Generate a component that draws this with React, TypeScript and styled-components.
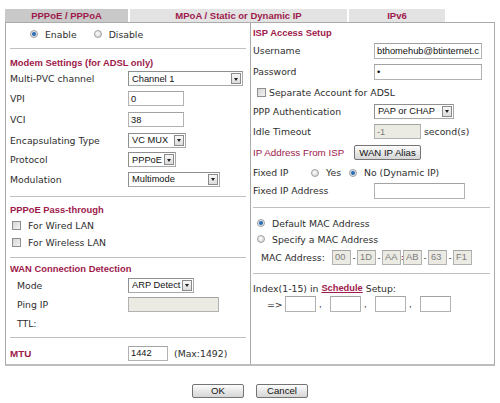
import React from "react";
import styled, { createGlobalStyle } from "styled-components";

const maroon = "#9e1a4b";
const verdana = `"DejaVu Sans", Verdana, sans-serif`;
const arial = `"Liberation Sans", Arial, sans-serif`;

const Global = createGlobalStyle`
  html, body { margin: 0; padding: 0; background: #fff; }
  body { font-family: ${verdana}; font-size: 9.3px; color: #2e2e2e; }
`;

const Page = styled.div`
  width: 490px;
  padding: 9px 0 0 5px;
`;

const TabBar = styled.div`
  display: flex;
  gap: 2px;
  height: 13px;
`;

const Tab = styled.div<{ $w: number; $active?: boolean }>`
  width: ${(p) => p.$w}px;
  background: ${(p) => (p.$active ? "#c9c9c9" : "#e3e3e3")};
  color: ${maroon};
  font: bold 9.5px ${arial};
  display: flex;
  align-items: center;
  justify-content: center;
`;

const Panel = styled.div`
  box-sizing: border-box;
  height: 344px;
  border: 1px solid #ababab;
  border-bottom: 2px solid #bdbdbd;
  display: grid;
  grid-template-columns: 245px 1fr;
`;

const Column = styled.div<{ $pl: number; $divider?: boolean }>`
  box-sizing: border-box;
  display: flex;
  flex-direction: column;
  padding-left: ${(p) => p.$pl}px;
  border-right: ${(p) => (p.$divider ? "1px solid #ababab" : "none")};
`;

const Row = styled.div<{ $h: number; $mt?: number; $pl?: number }>`
  display: flex;
  align-items: center;
  height: ${(p) => p.$h}px;
  margin-top: ${(p) => p.$mt ?? 0}px;
  padding-left: ${(p) => p.$pl ?? 0}px;
  white-space: nowrap;
`;

const Heading = styled.div<{ $h: number; $mt?: number }>`
  display: flex;
  align-items: center;
  height: ${(p) => p.$h}px;
  margin-top: ${(p) => p.$mt ?? 0}px;
  color: ${maroon};
  font: bold 9.4px ${arial};
  white-space: nowrap;
`;

const Divider = styled.div<{ $mt: number; $mr?: number }>`
  height: 1px;
  background: #c0c0c0;
  margin-top: ${(p) => p.$mt}px;
  margin-right: ${(p) => p.$mr ?? 4}px;
`;

const Label = styled.span<{ $w?: number; $accent?: boolean; $bold?: boolean }>`
  flex-shrink: 0;
  width: ${(p) => (p.$w ? `${p.$w}px` : "auto")};
  color: ${(p) => (p.$accent ? maroon : "#2e2e2e")};
  font-family: ${(p) => (p.$accent ? arial : verdana)};
  font-size: ${(p) => (p.$accent ? "9.8px" : "9.3px")};
  font-weight: ${(p) => (p.$bold ? "bold" : "normal")};
`;

const Unit = styled.span<{ $ml?: number }>`
  margin-left: ${(p) => p.$ml ?? 0}px;
`;

const TextInput = styled.input<{ $w: number; $off?: boolean; $h?: number }>`
  box-sizing: border-box;
  width: ${(p) => p.$w}px;
  height: ${(p) => p.$h ?? 15}px;
  margin: 0;
  padding: 0 2px;
  border: 1px solid #b2b2b2;
  border-top-color: #a3a3a3;
  background: ${(p) => (p.$off ? "#ebebe4" : "#fff")};
  color: ${(p) => (p.$off ? "#7c7c7c" : "#111")};
  font: 9.3px ${arial};
  outline: none;
`;

const SelectBox = styled.div<{ $w: number }>`
  box-sizing: border-box;
  width: ${(p) => p.$w}px;
  height: 15px;
  display: flex;
  align-items: center;
  border: 1px solid #a9a9a9;
  border-top-color: #8f8f8f;
  border-left-color: #8f8f8f;
  background: #fff;
  padding-left: 3px;
  font: 9.3px ${arial};
  color: #111;
`;

const SelectText = styled.span`
  flex: 1;
  overflow: hidden;
`;

const ArrowBtn = styled.span`
  box-sizing: border-box;
  width: 10px;
  height: 11px;
  margin-right: 1px;
  border: 1px solid #8a8a8a;
  background: linear-gradient(#f7f7f7, #dcdcdc);
  display: flex;
  align-items: center;
  justify-content: center;
  &::after {
    content: "";
    border-left: 2.5px solid transparent;
    border-right: 2.5px solid transparent;
    border-top: 3px solid #222;
    margin-top: 1px;
  }
`;

const Choice = styled.span<{ $ml?: number; $gap?: number }>`
  display: inline-flex;
  align-items: center;
  gap: ${(p) => p.$gap ?? 7}px;
  margin-left: ${(p) => p.$ml ?? 0}px;
`;

const Radio = styled.span<{ $on?: boolean }>`
  box-sizing: border-box;
  width: 8px;
  height: 8px;
  border-radius: 50%;
  flex-shrink: 0;
  border: 1px solid #a0a0a0;
  background: ${(p) =>
    p.$on
      ? "radial-gradient(circle, #2d6fb5 0 1.5px, #8fb4da 2px, #e6e6e6 2.6px, #cfcfcf 100%)"
      : "radial-gradient(circle at 40% 40%, #fdfdfd, #cacaca)"};
`;

const Check = styled.span`
  box-sizing: border-box;
  width: 9px;
  height: 9px;
  flex-shrink: 0;
  border: 1px solid #8e8e8e;
  background: linear-gradient(135deg, #d4d4d4, #f4f4f4);
`;

const Button = styled.button<{ $w: number; $h?: number }>`
  box-sizing: border-box;
  width: ${(p) => p.$w}px;
  height: ${(p) => p.$h ?? 14}px;
  margin: 0;
  padding: 0;
  border: 1px solid #747474;
  border-radius: 2px;
  background: linear-gradient(#fdfdfd, #e6e6e6 55%, #d6d6d6);
  font: 9.6px ${arial};
  color: #111;
  line-height: 1;
`;

const MacGroup = styled.div`
  display: flex;
  align-items: center;
`;

const Sep = styled.span<{ $w: number; $accent?: boolean }>`
  width: ${(p) => p.$w}px;
  text-align: center;
  color: ${(p) => (p.$accent ? maroon : "#555")};
  font: bold 8px ${arial};
`;

const Comma = styled.span`
  width: 14px;
  padding-left: 3px;
  box-sizing: border-box;
  font: 9.3px ${arial};
`;

const ScheduleLink = styled.a`
  color: ${maroon};
  font: bold 9.3px ${arial};
  text-decoration: underline;
  margin: 0 3px;
`;

const Footer = styled.div`
  display: flex;
  justify-content: center;
  gap: 12px;
  margin-top: 18px;
`;

const Select = ({ w, value }: { w: number; value: string }) => (
  <SelectBox $w={w}>
    <SelectText>{value}</SelectText>
    <ArrowBtn />
  </SelectBox>
);

const mac = ["00", "1D", "AA", "AB", "63", "F1"];

export default function App() {
  return (
    <>
      <Global />
      <Page>
        <TabBar>
          <Tab $w={123} $active>PPPoE / PPPoA</Tab>
          <Tab $w={217}>MPoA / Static or Dynamic IP</Tab>
          <Tab $w={96}>IPv6</Tab>
        </TabBar>
        <Panel>
          <Column $pl={4} $divider>
            <Row $h={22}>
              <Choice $ml={20}><Radio $on />Enable</Choice>
              <Choice $ml={17}><Radio />Disable</Choice>
            </Row>
            <Divider $mt={3} />
            <Heading $h={14} $mt={6}>Modem Settings (for ADSL only)</Heading>
            <Row $h={19}><Label $w={118}>Multi-PVC channel</Label><Select w={115} value="Channel 1" /></Row>
            <Row $h={21}><Label $w={118}>VPI</Label><TextInput $w={56} defaultValue="0" /></Row>
            <Row $h={21}><Label $w={118}>VCI</Label><TextInput $w={56} defaultValue="38" /></Row>
            <Row $h={20}><Label $w={118}>Encapsulating Type</Label><Select w={58} value="VC MUX" /></Row>
            <Row $h={19}><Label $w={118}>Protocol</Label><Select w={48} value="PPPoE" /></Row>
            <Row $h={20}><Label $w={118}>Modulation</Label><Select w={92} value="Multimode" /></Row>
            <Divider $mt={7} />
            <Heading $h={16} $mt={4}>PPPoE Pass-through</Heading>
            <Row $h={17}><Choice $ml={2}><Check />For Wired LAN</Choice></Row>
            <Row $h={17}><Choice $ml={2}><Check />For Wireless LAN</Choice></Row>
            <Divider $mt={6} />
            <Heading $h={16} $mt={2}>WAN Connection Detection</Heading>
            <Row $h={18} $pl={7}><Label $w={111}>Mode</Label><Select w={66} value="ARP Detect" /></Row>
            <Row $h={21} $pl={7}><Label $w={111}>Ping IP</Label><TextInput $w={91} $off /></Row>
            <Row $h={17} $pl={7}><Label $w={111}>TTL:</Label></Row>
            <Divider $mt={5} />
            <Row $h={20} $mt={5}>
              <Label $w={118} $accent $bold>MTU</Label>
              <TextInput $w={40} defaultValue="1442" />
              <Unit $ml={6}>(Max:1492)</Unit>
            </Row>
          </Column>

          <Column $pl={2}>
            <Heading $h={18}>ISP Access Setup</Heading>
            <Row $h={19}><Label $w={121}>Username</Label><TextInput $w={108} $h={16} defaultValue="bthomehub@btinternet.com" /></Row>
            <Row $h={23}><Label $w={121}>Password</Label><TextInput $w={108} $h={16} defaultValue="•" /></Row>
            <Row $h={18}><Choice $ml={4} $gap={3}><Check />Separate Account for ADSL</Choice></Row>
            <Row $h={20}><Label $w={121}>PPP Authentication</Label><Select w={80} value="PAP or CHAP" /></Row>
            <Row $h={21}>
              <Label $w={121}>Idle Timeout</Label>
              <TextInput $w={47} $off defaultValue="-1" />
              <Unit $ml={3}>second(s)</Unit>
            </Row>
            <Row $h={21}>
              <Label $w={101} $accent>IP Address From ISP</Label>
              <Button $w={67} $h={15}>WAN IP Alias</Button>
            </Row>
            <Row $h={19}>
              <Label $w={58}>Fixed IP</Label>
              <Choice><Radio />Yes</Choice>
              <Choice $ml={8}><Radio $on />No (Dynamic IP)</Choice>
            </Row>
            <Row $h={17}><Label $w={121}>Fixed IP Address</Label><TextInput $w={91} $h={16} /></Row>
            <Divider $mt={8} />
            <Row $h={16} $mt={7}><Choice $ml={4}><Radio $on />Default MAC Address</Choice></Row>
            <Row $h={16}><Choice $ml={4}><Radio />Specify a MAC Address</Choice></Row>
            <Row $h={20} $pl={8}>
              <Label $w={71}>MAC Address:</Label>
              <MacGroup>
                {mac.map((m, i) => (
                  <React.Fragment key={m}>
                    {i > 0 && (
                      <Sep $w={i === 3 ? 2 : 6} $accent={i === 3}>{i === 3 ? ":" : "-"}</Sep>
                    )}
                    <TextInput $w={19} $off defaultValue={m} />
                  </React.Fragment>
                ))}
              </MacGroup>
            </Row>
            <Divider $mt={6} />
            <Row $h={16} $mt={6}>
              Index(1-15) in<ScheduleLink>Schedule</ScheduleLink>Setup:
            </Row>
            <Row $h={16} $pl={14}>
              <Label $w={18}>=&gt;</Label>
              {[0, 1, 2, 3].map((i) => (
                <React.Fragment key={i}>
                  {i > 0 && <Comma>,</Comma>}
                  <TextInput $w={31} $h={16} />
                </React.Fragment>
              ))}
            </Row>
          </Column>
        </Panel>
        <Footer>
          <Button $w={52}>OK</Button>
          <Button $w={52}>Cancel</Button>
        </Footer>
      </Page>
    </>
  );
}
